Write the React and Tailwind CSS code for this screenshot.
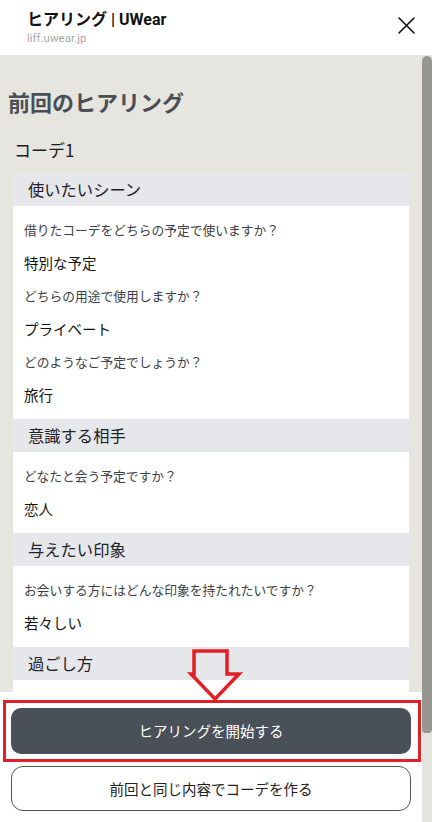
import React from "react";

const jp = { fontFamily: '"Noto Sans CJK JP", "Noto Sans", sans-serif' };

function Section({ title, items }) {
  return (
    <div>
      <div className="h-[33px] bg-[#e5e7eb] pl-[15px] flex items-center text-[16.3px] text-[#1f2227]">
        {title}
      </div>
      <div className="bg-white px-[11px] pt-[7px] pb-[8px]">
        {items.map(([q, a]) => (
          <React.Fragment key={q}>
            <div className="h-[33px] flex items-center text-[12.75px] text-[#3d4146]">{q}</div>
            <div className="h-[33px] flex items-center text-[14.5px] text-[#111]">{a}</div>
          </React.Fragment>
        ))}
      </div>
    </div>
  );
}

export default function App() {
  return (
    <div className="w-[432px] h-[822px] overflow-hidden bg-white flex flex-col" style={jp}>
      <header className="h-[55px] shrink-0 flex items-start justify-between pl-[27px] pr-[17px]">
        <div className="pt-[9px]">
          <div className="text-[16px] font-bold leading-[21px] text-[#111]" style={{ fontFamily: 'Roboto, "Noto Sans CJK JP", sans-serif' }}>
            ヒアリング | UWear
          </div>
          <div className="text-[11.5px] leading-[14px] text-[#a9a9a9] mt-[1px]" style={{ fontFamily: 'Roboto, sans-serif' }}>
            liff.uwear.jp
          </div>
        </div>
        <svg className="mt-[17px]" width="17" height="17" viewBox="0 0 17 17" fill="none" stroke="#111" strokeWidth="1.6" strokeLinecap="round">
          <path d="M1 1 L16 16 M16 1 L1 16" />
        </svg>
      </header>

      <div className="relative flex flex-1 min-h-0">
        <div className="w-[422px] bg-[#e6e5df] overflow-hidden">
          <h1 className="mt-[31px] pl-[8px] text-[22px] leading-[30px] font-bold text-[#4a4f55]">前回のヒアリング</h1>
          <div className="mt-[22px] pl-[14px] text-[17px] leading-[24px] text-[#1c1c1c]">コーデ1</div>
          <div className="mt-[11px] mx-[13px]">
            <Section
              title="使いたいシーン"
              items={[
                ["借りたコーデをどちらの予定で使いますか？", "特別な予定"],
                ["どちらの用途で使用しますか？", "プライベート"],
                ["どのようなご予定でしょうか？", "旅行"],
              ]}
            />
            <Section title="意識する相手" items={[["どなたと会う予定ですか？", "恋人"]]} />
            <Section title="与えたい印象" items={[["お会いする方にはどんな印象を持たれたいですか？", "若々しい"]]} />
            <Section title="過ごし方" items={[["どのように過ごす予定ですか？", "観光"]]} />
          </div>
        </div>
        <div className="w-[10px] bg-[#e4e4df] flex flex-col">
          <div className="h-[677px] mt-[1px] bg-[#979792] rounded-t-[5px] rounded-b-[4px]" />
        </div>

        <div className="absolute left-0 bottom-0 w-[422px] h-[130px] bg-white flex flex-col items-center pt-[16px] gap-[12px]">
          <button className="w-[400px] h-[46px] rounded-[10px] bg-[#4a5057] text-white text-[14.5px]">
            ヒアリングを開始する
          </button>
          <button className="w-[400px] h-[45px] rounded-[12px] bg-white border border-[#555] text-[#222] text-[14.5px]">
            前回と同じ内容でコーデを作る
          </button>
          <div className="absolute left-[3px] top-[8px] w-[418px] h-[62px] border-[3.5px] border-[#e21f26] pointer-events-none" />
        </div>

        <svg className="absolute left-[186px] top-[593px]" width="58" height="56" viewBox="186 648 58 56" fill="none" stroke="#e21f26" strokeWidth="3.5" strokeLinejoin="miter">
          <path d="M194 651 L227 651 L227 674 L239 674 L215 699 L191 674 L194 674 Z" />
        </svg>
      </div>
    </div>
  );
}
